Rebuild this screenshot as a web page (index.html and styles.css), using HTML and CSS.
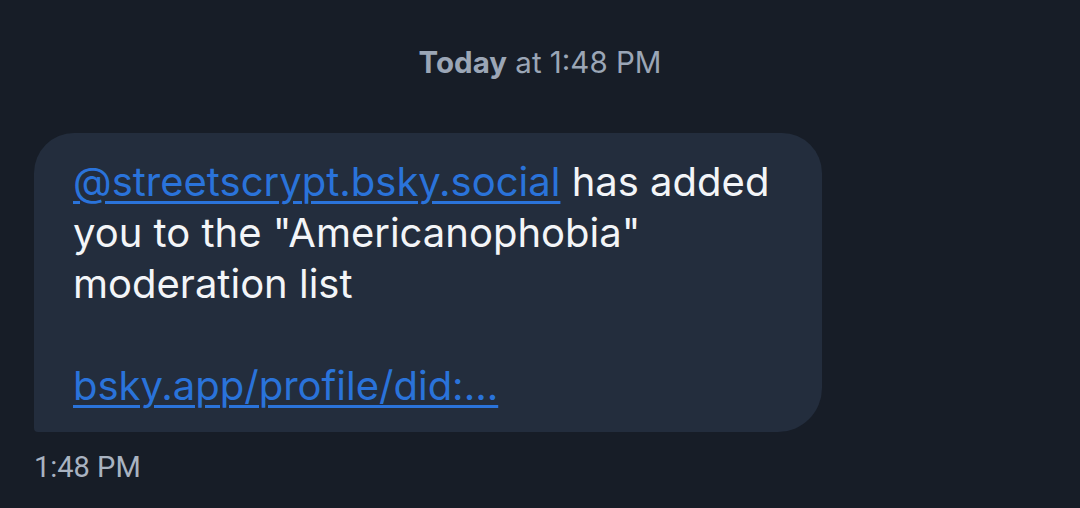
FILE: index.html
```html
<!DOCTYPE html>
<html>
<head>
<meta charset="utf-8">
<link rel="stylesheet" href="styles.css">
</head>
<body>
<div class="chat">
  <div class="day"><b>Today</b> at 1:48 PM</div>
  <div class="bubble">
    <p class="msg"><a class="link" href="#">@streetscrypt.bsky.social</a> has added you to the "Americanophobia" moderation list</p>
    <p class="msg spacer">&nbsp;</p>
    <p class="msg"><a class="link" href="#">bsky.app/profile/did:...</a></p>
  </div>
  <div class="time">1:48 PM</div>
</div>
</body>
</html>
```
FILE: styles.css
```css
html, body {
  margin: 0;
  padding: 0;
  background: #171d27;
  width: 1080px;
  height: 508px;
  overflow: hidden;
}
.chat {
  display: flex;
  flex-direction: column;
  align-items: flex-start;
  padding: 40px 0 0 34px;
}
.day {
  align-self: stretch;
  margin-left: -34px;
  text-align: center;
  font-family: Inter, sans-serif;
  font-size: 29.5px;
  line-height: 44px;
  color: #9ba6b6;
}
.day b {
  font-weight: 700;
}
.bubble {
  margin-top: 49px;
  box-sizing: border-box;
  width: 788px;
  height: 299px;
  background: #232d3d;
  border-radius: 40px 40px 44px 4px;
  padding: 23px 30px 0 39px;
}
.msg {
  margin: 0;
  font-family: Inter, sans-serif;
  font-size: 40px;
  line-height: 51px;
  color: #f3f5f8;
}
.link {
  color: #2a73da;
  text-decoration: underline;
  text-decoration-thickness: 3px;
  text-underline-offset: 5px;
}
.time {
  margin-top: 18px;
  font-family: Roboto, sans-serif;
  font-size: 29px;
  line-height: 34px;
  color: #a9b3c1;
}
```
